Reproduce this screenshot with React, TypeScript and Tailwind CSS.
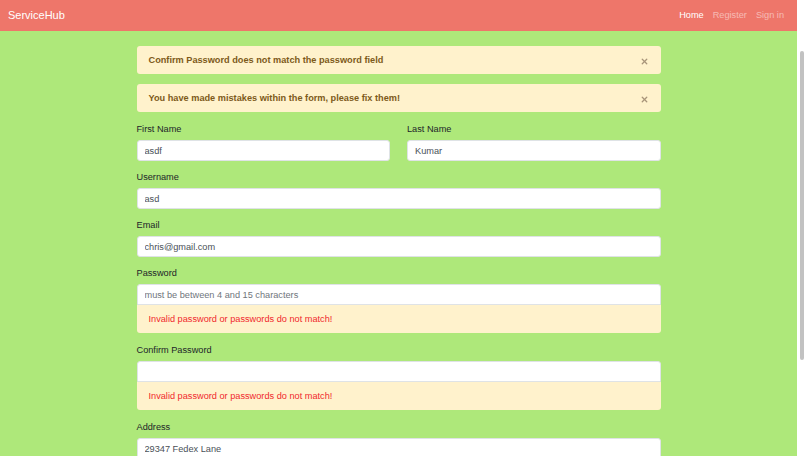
import { X } from "lucide-react";

const FONT = "font-['Liberation_Sans',Arial,sans-serif]";

function Field({ label, value, placeholder }: { label: string; value?: string; placeholder?: string }) {
  return (
    <div className="flex flex-col">
      <label className="text-[9.2px] leading-[14px] text-[#212529] mb-[4px]">{label}</label>
      <input
        readOnly
        value={value ?? ""}
        placeholder={placeholder}
        className="h-[21px] w-full bg-white border border-[#dfe3e6] rounded-[3px] px-[7px] text-[9.2px] text-[#495057] placeholder:text-[#6f757c] outline-none"
      />
    </div>
  );
}

function PasswordField({ label, placeholder }: { label: string; placeholder?: string }) {
  return (
    <div className="flex flex-col mb-[1px]">
      <label className="text-[9.2px] leading-[14px] text-[#212529] mb-[4px]">{label}</label>
      <input
        readOnly
        value=""
        placeholder={placeholder}
        className="h-[21px] w-full bg-white border border-[#dfe3e6] rounded-t-[3px] px-[7px] text-[9.2px] text-[#495057] placeholder:text-[#6f757c] outline-none"
      />
      <div className="h-[28px] flex items-center bg-[#fff2cc] rounded-b-[3px] pl-[12px] pt-[1px] text-[9.2px] text-[#f0282d]">
        Invalid password or passwords do not match!
      </div>
    </div>
  );
}

function Alert({ text }: { text: string }) {
  return (
    <div className="h-[28px] flex items-center justify-between bg-[#fff2cc] rounded-[3px] pl-[12px] pr-[12px] pt-[2px] text-[9.2px] font-bold text-[#7d5a1a]">
      <span>{text}</span>
      <X size={9} strokeWidth={3.5} className="text-[#a8957a]" />
    </div>
  );
}

export default function App() {
  return (
    <div className={`h-[456px] overflow-hidden flex ${FONT}`}>
      <div className="flex-1 bg-[#aee87a] flex flex-col">
        <nav className="h-[31px] bg-[#ee766a] flex items-center justify-between px-[8px] shrink-0">
          <span className="text-white text-[11px]">ServiceHub</span>
          <div className="flex items-center gap-[9px] text-[9.2px] pr-[5px]">
            <span className="text-white">Home</span>
            <span className="text-white/50">Register</span>
            <span className="text-white/50">Sign in</span>
          </div>
        </nav>

        <div className="w-[524px] mx-auto pt-[15px] flex flex-col">
          <div className="flex flex-col gap-[10px] mb-[10px]">
            <Alert text="Confirm Password does not match the password field" />
            <Alert text="You have made mistakes within the form, please fix them!" />
          </div>

          <div className="flex flex-col gap-[9px]">
            <div className="grid grid-cols-2 gap-[17px]">
              <Field label="First Name" value="asdf" />
              <Field label="Last Name" value="Kumar" />
            </div>
            <Field label="Username" value="asd" />
            <Field label="Email" value="chris@gmail.com" />
            <PasswordField label="Password" placeholder="must be between 4 and 15 characters" />
            <PasswordField label="Confirm Password" />
            <Field label="Address" value="29347 Fedex Lane" />
          </div>
        </div>
      </div>

      <div className="w-[9px] bg-white pt-[51px] pl-[3px] shrink-0">
        <div className="w-[4px] h-[309px] bg-[#c2c2c2] rounded-full" />
      </div>
    </div>
  );
}
